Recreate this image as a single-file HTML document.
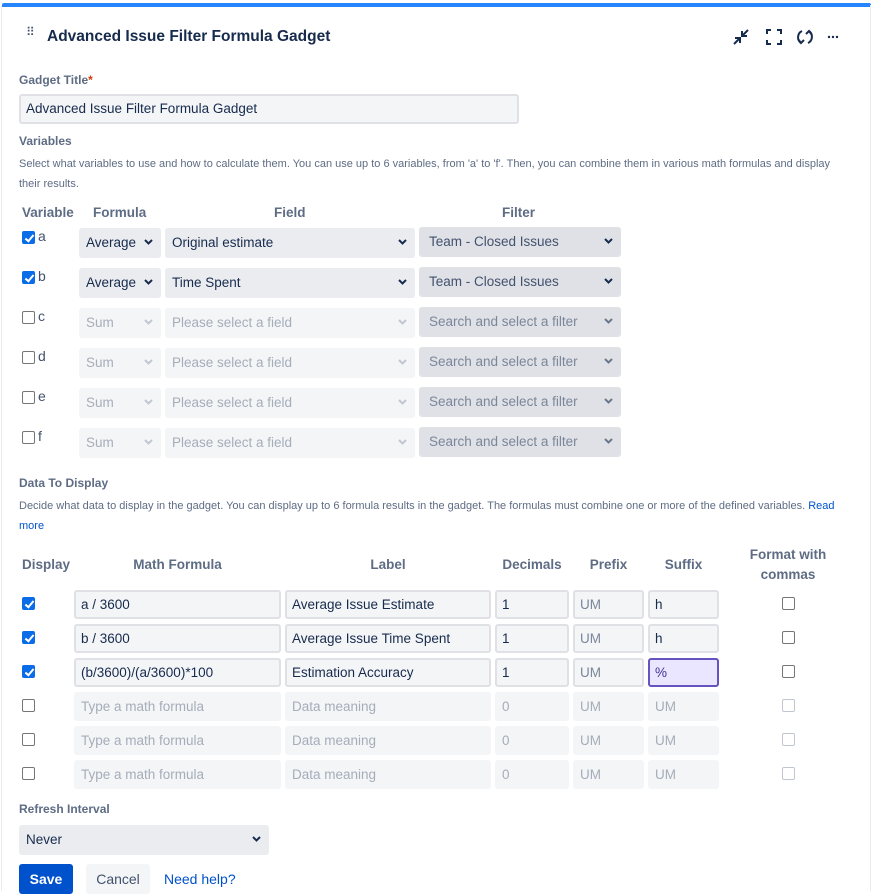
<!DOCTYPE html>
<html><head><meta charset="utf-8"><style>
*{box-sizing:border-box;margin:0;padding:0}
body{width:876px;height:891px;background:#fff;font-family:"Liberation Sans",sans-serif;color:#172b4d;position:relative;overflow:hidden}
.a{position:absolute;white-space:nowrap}
.lbl{font-size:12px;font-weight:bold;color:#5e6c84}
.desc{font-size:11px;color:#5e6c84}
.hd{font-size:13.5px;font-weight:bold;color:#5e6c84;text-align:center}
.sel{position:absolute;height:30px;background:#ebecf0;border-radius:3px;font-size:13.5px;line-height:30px;padding-left:7px;color:#172b4d}
.sel.dis{background:#f4f5f7;color:#a5adba}
.sel.flt{background:#dfe1e6;padding-left:10px;color:#42526e}
.sel.flt.dis{color:#7a869a}
.sel svg{position:absolute;right:8px;top:11px}
.inp{position:absolute;height:29px;background:#f4f5f7;border:2px solid #dfe1e6;border-radius:3px;font-size:13.5px;line-height:25px;padding-left:5px;color:#172b4d}
.inp.dis{border-color:#f4f5f7;color:#a5adba}
.cb{position:absolute;width:13px;height:13px;border:1px solid #767676;border-radius:2px;background:#fff}
.cb.on{background:#0b6ce8;border-color:#0b6ce8}
.cb.on:after{content:"";position:absolute;left:3.5px;top:0.5px;width:3px;height:7px;border:solid #fff;border-width:0 2px 2px 0;transform:rotate(40deg)}
.cb.off2{border-color:#c1c7d0}
.vl{font-size:14px;color:#42526e}
</style></head><body>
<div class="a" style="left:2px;top:3px;width:869px;height:4px;background:#2684ff;border-radius:2px 2px 0 0"></div>
<div class="a" style="left:1px;top:5px;width:870px;height:886px;border-left:1px solid #ebecf0;border-right:1px solid #ebecf0"></div>
<div class="a" style="left:26px;top:28px;font-size:12px;color:#42526e;letter-spacing:-1px;line-height:8px">⠿</div>
<div class="a" style="left:47px;top:28px;font-size:15.5px;font-weight:bold;color:#172b4d">Advanced Issue Filter Formula Gadget</div>
<svg class="a" style="left:732px;top:28px" width="110" height="18" viewBox="0 0 110 18" fill="none" stroke="#172b4d" stroke-width="2">
<path d="M2 16L8 10M3 10h5v5M16 2l-6 6M10 3v5h5" />
<path d="M35 6V2h4M45 2h4v4M49 12v4h-4M39 16h-4v-4"/>
<path d="M70 3a7 7 0 0 0-1 12M66 11l3 4 3-3M76 15a7 7 0 0 0 1-12M80 7l-3-4-3 3"/>
<circle cx="101" cy="9" r="1.2" fill="#172b4d" stroke="none"/><circle cx="105" cy="9" r="1.2" fill="#172b4d" stroke="none"/><circle cx="97" cy="9" r="1.2" fill="#172b4d" stroke="none"/>
</svg>
<div class="a lbl" style="left:19px;top:73px">Gadget Title<span style="color:#de350b">*</span></div>
<div class="inp" style="left:19px;top:94px;width:500px;height:30px;line-height:26px">Advanced Issue Filter Formula Gadget</div>
<div class="a lbl" style="left:19px;top:134px">Variables</div>
<div class="a desc" style="left:19px;top:158px">Select what variables to use and how to calculate them. You can use up to 6 variables, from 'a' to 'f'. Then, you can combine them in various math formulas and display</div>
<div class="a desc" style="left:19px;top:178px">their results.</div>
<div class="a hd" style="left:22px;top:205px">Variable</div>
<div class="a hd" style="left:93px;top:205px">Formula</div>
<div class="a hd" style="left:274px;top:205px">Field</div>
<div class="a hd" style="left:502px;top:205px">Filter</div>

<div id="vars"></div>

<div class="a lbl" style="left:19px;top:476px">Data To Display</div>
<div class="a desc" style="left:19px;top:500px">Decide what data to display in the gadget. You can display up to 6 formula results in the gadget. The formulas must combine one or more of the defined variables. <span style="color:#0052cc">Read</span></div>
<div class="a desc" style="left:19px;top:520px;color:#0052cc">more</div>
<div class="a hd" style="left:22px;top:557px">Display</div>
<div class="a hd" style="left:74px;top:557px;width:207px">Math Formula</div>
<div class="a hd" style="left:285px;top:557px;width:206px">Label</div>
<div class="a hd" style="left:495px;top:557px;width:74px">Decimals</div>
<div class="a hd" style="left:573px;top:557px;width:71px">Prefix</div>
<div class="a hd" style="left:648px;top:557px;width:71px">Suffix</div>
<div class="a hd" style="left:738px;top:545px;width:100px;line-height:20px;white-space:normal">Format with commas</div>
<div id="data"></div>

<div class="a lbl" style="left:19px;top:802px">Refresh Interval</div>
<div class="sel" style="left:19px;top:825px;width:250px">Never<svg width="9" height="6" viewBox="0 0 9 6"><path d="M1 1l3.5 3.5L8 1" stroke="#172b4d" stroke-width="2" fill="none"/></svg></div>
<div class="a" style="left:19px;top:864px;width:54px;height:30px;background:#0052cc;border-radius:3px;color:#fff;font-weight:bold;font-size:14px;line-height:30px;text-align:center">Save</div>
<div class="a" style="left:86px;top:864px;width:64px;height:30px;background:#f4f5f7;border-radius:3px;color:#42526e;font-size:14px;line-height:30px;text-align:center">Cancel</div>
<div class="a" style="left:164px;top:871px;color:#0052cc;font-size:14px">Need help?</div>

<script>
var ch='<svg width="9" height="6" viewBox="0 0 9 6"><path d="M1 1l3.5 3.5L8 1" stroke="C" stroke-width="2" fill="none"/></svg>';
var v=['a','b','c','d','e','f'],h='';
for(var i=0;i<6;i++){var y=228+i*40,on=i<2,d=on?'':' dis',c=on?'#172b4d':'#c1c7d0';
h+='<div class="cb'+(on?' on':'')+'" style="left:22px;top:'+(y+3)+'px"></div>';
h+='<div class="a vl" style="left:38px;top:'+(y)+'px">'+v[i]+'</div>';
h+='<div class="sel'+d+'" style="left:79px;top:'+y+'px;width:82px">'+(on?'Average':'Sum')+ch.replace('C',c)+'</div>';
h+='<div class="sel'+d+'" style="left:165px;top:'+y+'px;width:250px">'+(on?(i==0?'Original estimate':'Time Spent'):'Please select a field')+ch.replace('C',c)+'</div>';
h+='<div class="sel flt'+d+'" style="left:419px;top:'+(y-1)+'px;width:202px">'+(on?'Team - Closed Issues':'Search and select a filter')+ch.replace('C',on?'#172b4d':'#6b778c')+'</div>';}
document.getElementById('vars').outerHTML=h;
var f=['a / 3600','b / 3600','(b/3600)/(a/3600)*100'],l=['Average Issue Estimate','Average Issue Time Spent','Estimation Accuracy'],s=['h','h','%'];h='';
for(i=0;i<6;i++){var y=590+i*34,on=i<3,d=on?'':' dis';
h+='<div class="cb'+(on?' on':'')+'" style="left:22px;top:'+(y+7)+'px"></div>';
h+='<div class="inp'+d+'" style="left:74px;top:'+y+'px;width:207px">'+(on?f[i]:'Type a math formula')+'</div>';
h+='<div class="inp'+d+'" style="left:285px;top:'+y+'px;width:206px">'+(on?l[i]:'Data meaning')+'</div>';
h+='<div class="inp'+d+'" style="left:495px;top:'+y+'px;width:74px">'+(on?'1':'0')+'</div>';
h+='<div class="inp'+d+'" style="left:573px;top:'+y+'px;width:71px;color:'+(on?'#7a869a':'#a5adba')+'">UM</div>';
h+='<div class="inp'+d+'" style="left:648px;top:'+y+'px;width:71px'+(i==2?';background:#eae6ff;border-color:#6554c0;color:#403294':'')+'">'+(on?s[i]:'UM')+'</div>';
h+='<div class="cb'+(on?'':' off2')+'" style="left:782px;top:'+(y+7)+'px"></div>';}
document.getElementById('data').outerHTML=h;
</script>
</body></html>
